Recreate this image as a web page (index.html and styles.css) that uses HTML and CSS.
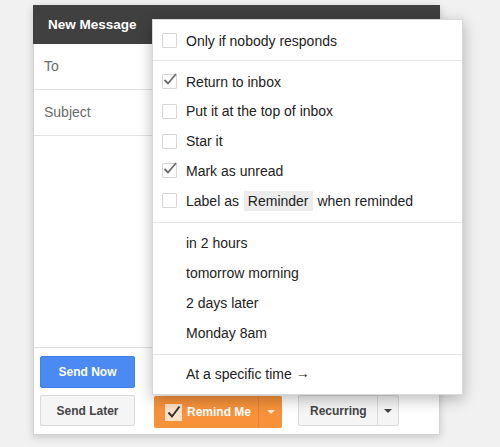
FILE: index.html
```html
<!DOCTYPE html>
<html>
<head>
<meta charset="utf-8">
<link rel="stylesheet" href="styles.css">
</head>
<body>
<div class="stage">
  <div class="compose">
    <div class="header">New Message</div>
    <div class="field">To</div>
    <div class="field">Subject</div>
    <div class="body"></div>
    <div class="footer">
      <button class="btn send-now">Send Now</button>
      <button class="btn send-later">Send Later</button>
      <div class="split remind">
        <span class="main"><span class="rbox"><svg width="17" height="17" viewBox="0 0 17 17"><path d="M3.5 8.5 L7 12.5 L14.5 2.5" fill="none" stroke="#333" stroke-width="2"/></svg></span>Remind Me</span>
        <span class="drop"><span class="tri white"></span></span>
      </div>
      <div class="split recurring">
        <span class="main">Recurring</span>
        <span class="drop"><span class="tri dark"></span></span>
      </div>
    </div>
  </div>

  <div class="menu">
    <div class="section first">
      <div class="item"><span class="cb"></span>Only if nobody responds</div>
    </div>
    <div class="section">
      <div class="item"><span class="cb checked"><svg width="17" height="15" viewBox="0 0 17 15"><path d="M2.5 8 L6 11.5 L14 2" fill="none" stroke="#6b6b6b" stroke-width="1.8"/></svg></span>Return to inbox</div>
      <div class="item"><span class="cb"></span>Put it at the top of inbox</div>
      <div class="item"><span class="cb"></span>Star it</div>
      <div class="item"><span class="cb checked"><svg width="17" height="15" viewBox="0 0 17 15"><path d="M2.5 8 L6 11.5 L14 2" fill="none" stroke="#6b6b6b" stroke-width="1.8"/></svg></span>Mark as unread</div>
      <div class="item"><span class="cb"></span>Label as <span class="chip">Reminder</span> when reminded</div>
    </div>
    <div class="section">
      <div class="item plain">in 2 hours</div>
      <div class="item plain">tomorrow morning</div>
      <div class="item plain">2 days later</div>
      <div class="item plain">Monday 8am</div>
    </div>
    <div class="section last">
      <div class="item plain">At a specific time <span class="arrow">→</span></div>
    </div>
  </div>
</div>
</body>
</html>
```

FILE: styles.css
```css
* { box-sizing: border-box; }
html, body {
  margin: 0;
  padding: 0;
  background: #f1f1f1;
  font-family: "Liberation Sans", Arial, sans-serif;
}
.stage {
  position: relative;
  width: 500px;
  height: 447px;
  padding: 5px 0 0 33px;
}
.compose {
  width: 407px;
  height: 430px;
  background: #fff;
  border: 1px solid #d4d4d4;
  border-top: none;
  box-shadow: 0 2px 8px rgba(0,0,0,0.18);
  display: flex;
  flex-direction: column;
}
.header {
  height: 39px;
  margin: 0 -1px;
  background: #404040;
  color: #fff;
  font-weight: bold;
  font-size: 13.5px;
  line-height: 39px;
  padding-left: 15px;
}
.field {
  height: 46px;
  border-bottom: 1px solid #e3e3e3;
  color: #6a6a6a;
  font-size: 14px;
  line-height: 45px;
  padding-left: 10px;
}
.body { flex: 1; }
.footer {
  border-top: 1px solid #dedede;
  padding: 8px 0 0 6px;
  height: 87px;
  display: grid;
  grid-template-columns: 95px auto auto 1fr;
  grid-template-rows: 32px 32px;
  row-gap: 7px;
  align-items: start;
}
.btn {
  font-family: "Liberation Sans", Arial, sans-serif;
  font-weight: bold;
  font-size: 12px;
  border-radius: 2px;
  padding: 0;
  margin: 0;
}
.send-now {
  grid-row: 1; grid-column: 1;
  height: 32px;
  background: #4a8af2;
  border: 1px solid #3f80ea;
  color: #fff;
}
.send-later {
  grid-row: 2; grid-column: 1;
  height: 31px;
  background: #f5f5f5;
  border: 1px solid #dadada;
  color: #444;
}
.split {
  grid-row: 2;
  display: flex;
  border-radius: 2px;
  font-weight: bold;
  font-size: 12px;
}
.remind {
  grid-column: 2;
  margin-left: 19px;
  margin-top: 1px;
  height: 32px;
  background: #f7923a;
  color: #fff;
}
.remind .main {
  display: flex;
  align-items: center;
  padding: 0 7px 0 11px;
  border-right: 1px solid #e8843a;
}
.rbox {
  width: 17px;
  height: 17px;
  background: rgba(255,255,255,0.72);
  margin-right: 5px;
  display: flex;
}
.remind .drop {
  width: 23px;
  display: flex;
  align-items: center;
  justify-content: center;
}
.recurring {
  grid-column: 3;
  margin-left: 16px;
  height: 31px;
  background: #f5f5f5;
  border: 1px solid #dadada;
  color: #444;
}
.recurring .main {
  display: flex;
  align-items: center;
  padding: 0 10px 0 11px;
  border-right: 1px solid #dadada;
}
.recurring .drop {
  width: 20px;
  display: flex;
  align-items: center;
  justify-content: center;
}
.tri {
  width: 0;
  height: 0;
  border-left: 4px solid transparent;
  border-right: 4px solid transparent;
  border-top: 4px solid #fff;
}
.tri.white { border-top-color: #fde9d6; }
.tri.dark { border-top-color: #444; }

.menu {
  position: absolute;
  left: 152px;
  top: 19px;
  width: 311px;
  height: 376px;
  background: #fff;
  border: 1px solid #d8d8d8;
  box-shadow: 0 4px 14px rgba(0,0,0,0.28);
  font-size: 14px;
  color: #222;
}
.section {
  padding: 6px 0 6px;
  border-bottom: 1px solid #e6e6e6;
}
.section.first { padding: 6px 0 4px; }
.section.last { border-bottom: none; padding: 5px 0; }
.item {
  height: 29.75px;
  display: flex;
  align-items: center;
  padding-left: 9px;
  white-space: pre;
}
.item.plain { padding-left: 33px; }
.arrow {
  position: relative;
  top: -1px;
}
.cb {
  width: 15px;
  height: 15px;
  border: 1px solid #d6d6d6;
  border-radius: 1px;
  margin-right: 9px;
  position: relative;
  flex: none;
}
.cb svg {
  position: absolute;
  left: -1px;
  top: -3px;
}
.chip {
  background: #ececec;
  padding: 0 4px;
  line-height: 20px;
  margin: 0 1px;
}
```
